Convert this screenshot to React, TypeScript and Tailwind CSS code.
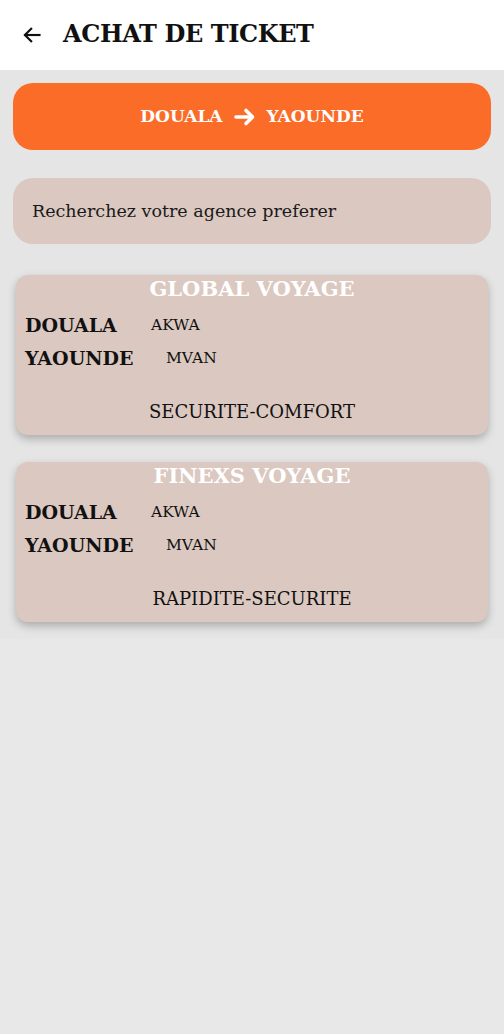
import React from "react";

const serif = { fontFamily: '"DejaVu Serif", "Liberation Serif", serif' };

function Card({ title, slogan }: { title: string; slogan: string }) {
  return (
    <div className="mx-[16px] rounded-[12px] bg-[#dbc8c0] shadow-[0_4px_8px_rgba(0,0,0,0.25)] h-[160px] flex flex-col">
      <div className="text-center text-white font-bold text-[21px] leading-[26px] mt-[1px]">{title}</div>
      <div className="flex flex-col pl-[9px] mt-[11px] gap-[8px]">
        <div className="flex items-center">
          <span className="w-[126px] font-bold text-[19px] leading-[25px] text-[#111]">DOUALA</span>
          <span className="text-[15.5px] leading-[25px] text-[#111]">AKWA</span>
        </div>
        <div className="flex items-center">
          <span className="w-[141px] font-bold text-[19px] leading-[25px] text-[#111]">YAOUNDE</span>
          <span className="text-[15.5px] leading-[25px] text-[#111]">MVAN</span>
        </div>
      </div>
      <div className="text-center text-[18px] leading-[24px] text-[#111] mt-[29px]">{slogan}</div>
    </div>
  );
}

export default function App() {
  return (
    <div className="min-h-[1034px] bg-[#e8e8e8]" style={serif}>
      <div className="h-[70px] bg-white flex items-center">
        <svg className="ml-[22px]" width="20" height="20" viewBox="0 0 24 24" fill="none" stroke="#111" strokeWidth="2.6" strokeLinecap="square">
          <path d="M21 12H4" />
          <path d="M11 4.5L3.5 12L11 19.5" />
        </svg>
        <h1 className="ml-[21px] text-[24px] tracking-[-0.4px] font-bold text-[#111] mt-[-3px]">ACHAT DE TICKET</h1>
      </div>
      <div className="bg-[#e5e5e5] pt-[13px] pb-[17px] flex flex-col">
        <div className="mx-[13px] h-[67px] rounded-[20px] bg-[#fb6c28] flex items-center justify-center gap-[10px] text-white font-bold text-[17px]">
          <span>DOUALA</span>
          <svg width="24" height="20" viewBox="0 0 24 20" fill="none" stroke="white" strokeWidth="3.6" strokeLinecap="round" strokeLinejoin="round">
            <path d="M3 10H19" />
            <path d="M13 3.5L19.5 10L13 16.5" />
          </svg>
          <span>YAOUNDE</span>
        </div>
        <div className="mx-[13px] mt-[28px] h-[66px] rounded-[20px] bg-[#dbc8c0] flex items-center pl-[19px] text-[17.5px] text-[#1a1a1a]">
          Recherchez votre agence preferer
        </div>
        <div className="mt-[31px] flex flex-col gap-[27px]">
          <Card title="GLOBAL VOYAGE" slogan="SECURITE-COMFORT" />
          <Card title="FINEXS VOYAGE" slogan="RAPIDITE-SECURITE" />
        </div>
      </div>
    </div>
  );
}
